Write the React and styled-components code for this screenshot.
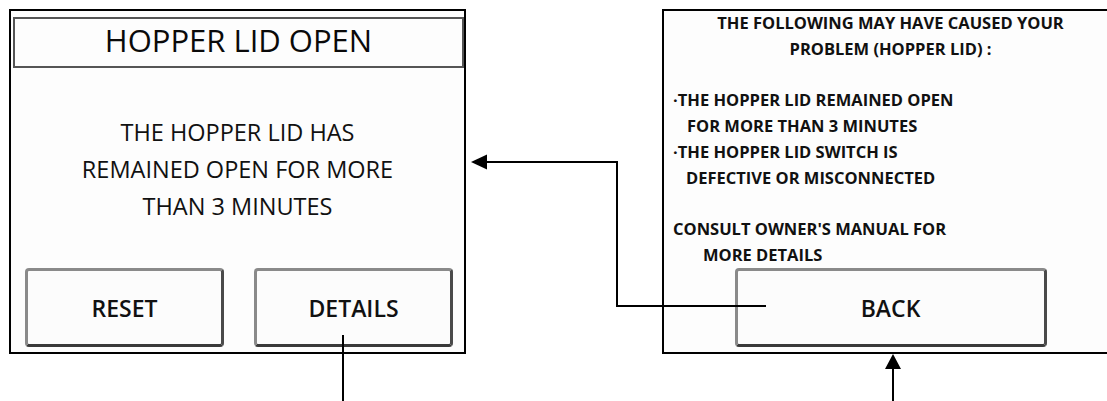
import React from 'react';
import styled, { createGlobalStyle } from 'styled-components';

const GlobalStyle = createGlobalStyle`
  html, body {
    margin: 0;
    padding: 0;
    background: #ffffff;
  }
  body {
    font-family: "Open Sans", "Liberation Sans", sans-serif;
    color: #111;
  }
`;

const Page = styled.div`
  position: relative;
  width: 1107px;
  height: 401px;
  overflow: hidden;
  display: flex;
  gap: 196px;
  padding: 9px 0 0 9px;
  box-sizing: border-box;
`;

const Panel = styled.div`
  flex: 0 0 auto;
  width: 457px;
  height: 345px;
  box-sizing: border-box;
  border: 2px solid #000;
  background: #fdfdfd;
  display: flex;
  flex-direction: column;
`;

const TitleBar = styled.div`
  margin: 6px 0 0 2px;
  height: 51px;
  box-sizing: border-box;
  border: 2px solid #555;
  padding-bottom: 6px;
  display: flex;
  align-items: center;
  justify-content: center;
  font-size: 31px;
  color: #0a0a0a;
`;

const Message = styled.div`
  flex: 1;
  display: flex;
  flex-direction: column;
  justify-content: center;
  text-align: center;
  font-size: 23.5px;
  line-height: 37px;
  padding-top: 2px;
`;

const Details = styled.div`
  flex: 1;
  margin-top: -1px;
  padding-left: 9px;
  font-size: 16.5px;
  font-weight: 700;
  line-height: 25.8px;
`;

const Heading = styled.div`
  text-align: center;
  padding-right: 9px;
`;

const Line = styled.div`
  padding-left: ${({ indent }) => indent || 0}px;
  min-height: 25.8px;
`;

const ButtonRow = styled.div`
  display: flex;
  justify-content: ${({ single }) => (single ? 'center' : 'space-between')};
  padding: ${({ single }) => (single ? '0 0 5px 0' : '0 11px 5px 14px')};
`;

const Button = styled.div`
  width: ${({ wide }) => (wide ? 312 : 199)}px;
  height: 79px;
  box-sizing: border-box;
  border: 3px solid #8a8a8a;
  border-right-color: #4a4a4a;
  border-bottom-color: #3a3a3a;
  border-radius: 4px;
  background: #fcfcfc;
  display: flex;
  align-items: center;
  justify-content: center;
  font-size: 23px;
  font-weight: 600;
  color: #111;
`;

const Connectors = styled.svg`
  position: absolute;
  left: 0;
  top: 0;
  pointer-events: none;
`;

const ErrorScreen = () => (
  <Panel>
    <TitleBar>HOPPER LID OPEN</TitleBar>
    <Message>
      <div>THE HOPPER LID HAS</div>
      <div>REMAINED OPEN FOR MORE</div>
      <div>THAN 3 MINUTES</div>
    </Message>
    <ButtonRow>
      <Button>RESET</Button>
      <Button>DETAILS</Button>
    </ButtonRow>
  </Panel>
);

const DetailsScreen = () => (
  <Panel>
    <Details>
      <Heading>THE FOLLOWING MAY HAVE CAUSED YOUR</Heading>
      <Heading>PROBLEM (HOPPER LID) :</Heading>
      <Line />
      <Line>·THE HOPPER LID REMAINED OPEN</Line>
      <Line indent={14}>FOR MORE THAN 3 MINUTES</Line>
      <Line>·THE HOPPER LID SWITCH IS</Line>
      <Line indent={13}>DEFECTIVE OR MISCONNECTED</Line>
      <Line />
      <Line>CONSULT OWNER'S MANUAL FOR</Line>
      <Line indent={30}>MORE DETAILS</Line>
    </Details>
    <ButtonRow single>
      <Button wide>BACK</Button>
    </ButtonRow>
  </Panel>
);

const App = () => (
  <>
    <GlobalStyle />
    <Page>
      <ErrorScreen />
      <DetailsScreen />
      <Connectors width="1107" height="401" viewBox="0 0 1107 401">
        <g stroke="#000" strokeWidth="2" fill="none">
          <polyline points="766,306 617,306 617,162 486,162" />
          <line x1="343" y1="335" x2="343" y2="401" />
          <line x1="893" y1="401" x2="893" y2="368" />
        </g>
        <g fill="#000">
          <polygon points="471,162 487,154.5 487,169.5" />
          <polygon points="893,354 885,369 901,369" />
        </g>
      </Connectors>
    </Page>
  </>
);

export default App;
